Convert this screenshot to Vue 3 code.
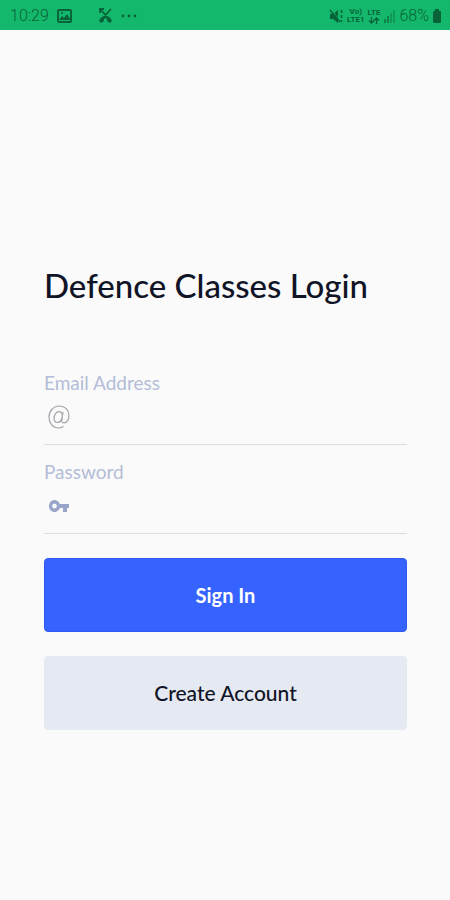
<script setup>
import { ref } from 'vue'

const email = ref('')
const password = ref('')
</script>

<template>
  <div class="screen">
    <header class="status">
      <div class="group">
        <span class="clock">10:29</span>
        <svg class="picture" width="15" height="14" viewBox="0 0 15 14" aria-hidden="true">
          <rect x="1" y="1" width="13" height="12" rx="1" fill="none" stroke="currentColor" stroke-width="2" />
          <path d="M2 11l3-4 2 2 3-4 3 5v1z" fill="currentColor" />
          <circle cx="5" cy="4" r="1" fill="currentColor" />
        </svg>
        <svg class="missed" width="15" height="16" viewBox="0 0 15 16" aria-hidden="true">
          <path d="M2 1l5.500 6L13 1M2 5V1h4" fill="none" stroke="currentColor" stroke-width="1.800" />
          <path d="M1 13c1-3 3-5 6.500-5s5.500 2 6.500 5l-2 2-3-2v-2.500H6V13l-3 2z" fill="currentColor" />
        </svg>
        <svg width="16" height="4" viewBox="0 0 16 4" fill="currentColor" aria-hidden="true">
          <circle cx="2" cy="2" r="1.400" /><circle cx="8" cy="2" r="1.400" /><circle cx="14" cy="2" r="1.400" />
        </svg>
      </div>
      <div class="group right">
        <svg width="15" height="15" viewBox="0 0 15 15" aria-hidden="true">
          <path d="M1 5h3l5-4v13l-5-4H1z" fill="currentColor" />
          <path d="M2 0l9 12" stroke="#14b86c" stroke-width="1" />
          <path d="M1 1l10 12M12.500 1v3M12.500 6v3M12.500 11v2" stroke="currentColor" stroke-width="1.600" />
        </svg>
        <span class="network"><span>Vo)</span><span>LTE1</span></span>
        <span class="network">
          <span>LTE</span>
          <svg width="12" height="7" viewBox="0 0 12 7" aria-hidden="true">
            <path d="M3.500 0v6M1 3.500L3.500 6 6 3.500M8.500 7V1M6 3.500L8.500 1 11 3.500" fill="none" stroke="currentColor" stroke-width="1.300" />
          </svg>
        </span>
        <svg class="signal" width="13" height="14" viewBox="0 0 13 14" fill="currentColor" aria-hidden="true">
          <path d="M1 10h2v4H1zM4 7h2v7H4z" /><path d="M7 4h2v10H7zM10 1h2v13h-2z" opacity=".6" />
        </svg>
        <span class="clock">68%</span>
        <svg width="10" height="14" viewBox="0 0 10 14" fill="currentColor" aria-hidden="true">
          <path d="M3 0h4v2h1q1 0 1 1v10q0 1-1 1H2q-1 0-1-1V3q0-1 1-1h1z" />
        </svg>
      </div>
    </header>

    <main>
      <h1>Defence Classes Login</h1>
      <form @submit.prevent>
        <div class="field">
          <label for="email">Email Address</label>
          <div class="entry">
            <svg class="at" width="22" height="24" viewBox="0 0 22 24" fill="none" stroke="currentColor" stroke-width="1.200" aria-hidden="true">
              <path d="M15.500 21.200C14 22.400 12.500 23 10.500 23 5 23 1 18.500 1 12.200 1 6 5.500 1 11.500 1 17 1 21 5 21 10.500c0 4.500-2.300 7.300-5 7.300-1.800 0-2.600-1-2.200-3L15 7" />
              <path d="M14.300 10.300C14.200 8 12.900 6.700 11 6.700c-2.800 0-4.900 3-4.900 6.500 0 2.500 1.200 4.300 3.200 4.300 2.100 0 3.900-1.800 4.600-4.500" />
            </svg>
            <input id="email" v-model="email" type="email" autocomplete="email" />
          </div>
        </div>
        <div class="field">
          <label for="password">Password</label>
          <div class="entry">
            <svg class="key" width="22" height="14" viewBox="0 0 22 14" fill="currentColor" aria-hidden="true">
              <path fill-rule="evenodd" d="M11.900 5H21v4h-2v4h-4V9h-3.100A5.700 6 0 1 1 11.900 5zM6.500 4.500a2.400 2.500 0 1 0 0 5 2.400 2.500 0 0 0 0-5z" />
            </svg>
            <input id="password" v-model="password" type="password" autocomplete="current-password" />
          </div>
        </div>
        <button class="primary" type="submit">Sign In</button>
        <button class="secondary" type="button">Create Account</button>
      </form>
    </main>
  </div>
</template>

<style>
body {
  background: #fafafa;
}
</style>

<style scoped>
.screen {
  min-height: 100vh;
  background: #fafafa;
  color: #101426;
  font-family: Lato, sans-serif;
}
.status {
  display: flex;
  align-items: center;
  justify-content: space-between;
  height: 30px;
  padding: 2px 8px 0 10px;
  box-sizing: border-box;
  background: #14b86c;
  color: #086338;
}
.group {
  display: flex;
  align-items: center;
  gap: 8px;
}
.right {
  gap: 3px;
}
.clock {
  font: 300 16px/20px Roboto, sans-serif;
}
.missed {
  margin-left: 18px;
}
.network {
  display: flex;
  flex-direction: column;
  align-items: center;
  font: bold 8px/8px Roboto, sans-serif;
}
.signal {
  opacity: 0.6;
}
main {
  padding: 233px 43px 40px 44px;
}
h1 {
  margin: 0 0 65px;
  font-size: 33px;
  line-height: 44px;
  font-weight: 500;
}
form {
  display: flex;
  flex-direction: column;
}
.field {
  display: flex;
  flex-direction: column;
  margin-bottom: 16px;
}
label {
  color: #b4bdd8;
  font-size: 19px;
  line-height: 22px;
}
.entry {
  display: flex;
  align-items: center;
  gap: 10px;
  height: 51px;
  padding: 0 4px 5px;
  box-sizing: border-box;
  border-bottom: 1px solid #dadde2;
}
.at {
  color: #a3a5aa;
}
.key {
  color: #98a5c8;
}
input {
  flex: 1;
  min-width: 0;
  border: 0;
  outline: 0;
  background: transparent;
  color: inherit;
  font: inherit;
  font-size: 19px;
}
button {
  height: 74px;
  border: 1px solid #2f5af0;
  border-radius: 4px;
  font-family: inherit;
  font-size: 20px;
  line-height: 24px;
  cursor: pointer;
}
.primary {
  margin: 8px 0 24px;
  background: #3663ff;
  color: #fff;
  font-weight: 700;
}
.secondary {
  border-color: #e5e9f1;
  background: #e5e9f1;
  color: #101426;
  font-size: 21px;
  font-weight: 500;
}
</style>
